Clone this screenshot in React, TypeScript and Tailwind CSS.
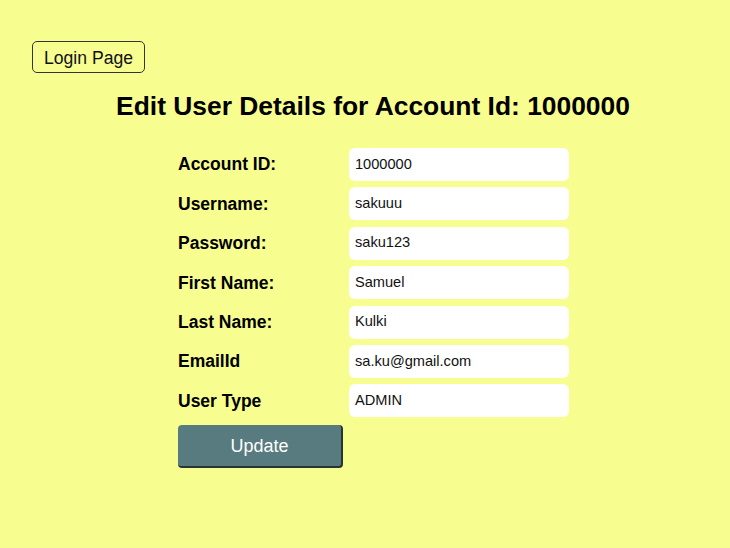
import React from "react";

const rows: [string, string][] = [
  ["Account ID:", "1000000"],
  ["Username:", "sakuuu"],
  ["Password:", "saku123"],
  ["First Name:", "Samuel"],
  ["Last Name:", "Kulki"],
  ["EmailId", "sa.ku@gmail.com"],
  ["User Type", "ADMIN"],
];

export default function App() {
  return (
    <div
      className="w-[730px] h-[548px] bg-[#f7fe8f] text-black overflow-hidden"
      style={{ fontFamily: '"Liberation Sans", Arial, sans-serif' }}
    >
      <div className="pt-[41px] pl-[32px]">
        <button className="w-[113px] h-[32px] pt-[3px] border border-[#333] rounded-[5px] text-[17.6px] leading-none text-[#111] bg-transparent">
          Login Page
        </button>
      </div>
      <h1 className="mt-[18px] pl-[16px] text-center text-[26.4px] font-bold leading-[30px]">
        Edit User Details for Account Id: 1000000
      </h1>
      <div className="mt-[27px] pl-[178px] flex flex-col">
        <div className="grid grid-cols-[171px_220px] gap-y-[6.4px]">
          {rows.map(([label, value]) => (
            <React.Fragment key={label}>
              <div className="h-[33px] flex items-center text-[17.5px] font-bold">{label}</div>
              <div className="h-[33px] bg-white rounded-[6px] flex items-center pl-[6px] text-[14.6px] text-[#111]">
                {value}
              </div>
            </React.Fragment>
          ))}
        </div>
        <button className="mt-[8px] w-[165px] h-[43px] pt-[2px] bg-[#587b80] rounded-[4px] border-r-2 border-b-2 border-[#2a3334] text-white text-[18px]">
          Update
        </button>
      </div>
    </div>
  );
}
